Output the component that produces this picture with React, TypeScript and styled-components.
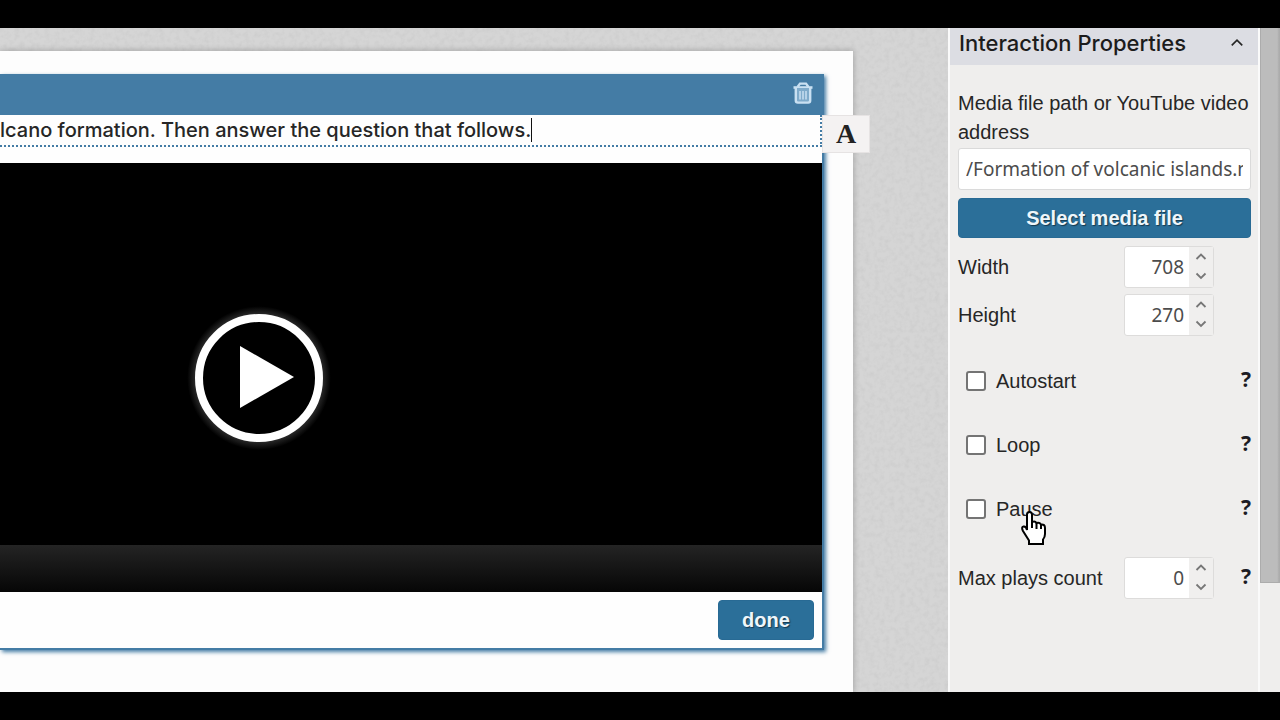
import React, { useState } from "react";
import styled, { createGlobalStyle } from "styled-components";

const sans = `"Liberation Sans", Arial, sans-serif`;
const humanist = `"Noto Sans", "Open Sans", sans-serif`;

const Global = createGlobalStyle`
  *, *::before, *::after { box-sizing: border-box; }
  body { margin: 0; background: #000; color: #262626; font: 20px/28px ${sans}; }
  button, input { font: inherit; color: inherit; margin: 0; }
  button { cursor: pointer; }
`;

const Screen = styled.div`
  min-height: 100vh;
  padding: 28px 0;
  display: flex;
  background: #000;
`;

const Workspace = styled.main`
  flex: 1;
  min-width: 0;
  display: flex;
  background: #efeeed;
  position: relative;
  overflow: hidden;
`;

const Canvas = styled.section`
  flex: 1;
  min-width: 0;
  display: flex;
  position: relative;
  overflow: hidden;
  padding: 23px 95px 0 0;
  background: #d5d5d5;
`;

const Texture = styled.svg`
  position: absolute;
  inset: 0;
  width: 100%;
  height: 100%;
`;

const Paper = styled.div`
  flex: 1;
  min-width: 0;
  position: relative;
  padding: 23px 29px 42px 0;
  background: #fdfdfd;
  box-shadow: 0 0 6px 1px rgba(0, 0, 0, 0.2);
`;

const Card = styled.article`
  position: relative;
  background: #fefefe;
  border: solid #447ca5;
  border-width: 0 2px 2px 0;
  box-shadow: 2px 2px 4px #447ca5;
`;

const CardHeader = styled.header`
  display: flex;
  justify-content: flex-end;
  align-items: center;
  height: 41px;
  padding: 0 8px 4px;
  background: #447ca5;
`;

const IconButton = styled.button`
  display: flex;
  padding: 0;
  border: 0;
  background: none;
`;

const Prompt = styled.div`
  display: flex;
  align-items: center;
  height: 32px;
  margin-bottom: 16px;
  border: dotted #447ca5;
  border-width: 0 2px 2px 0;
`;

const PromptInput = styled.input`
  field-sizing: content;
  padding: 0;
  border: 0;
  outline: 0;
  background: none;
  font: 500 20px/28px Inter, sans-serif;
`;

const Caret = styled.span`
  width: 1px;
  height: 24px;
  background: #111;
`;

const FontButton = styled.button`
  position: absolute;
  top: 41px;
  left: 100%;
  width: 48px;
  height: 38px;
  padding: 0;
  border: 1px solid #e6e3e3;
  background: #f4f2f2;
  color: #222;
  font: bold 28px/34px "Liberation Serif", serif;
`;

const Video = styled.div`
  background: #000;
`;

const Stage = styled.div`
  display: flex;
  align-items: center;
  height: 382px;
  padding: 48px 0 0 180px;
`;

const Controls = styled.div`
  height: 47px;
  background: linear-gradient(#242424, #060606);
`;

const CardFooter = styled.footer`
  display: flex;
  justify-content: flex-end;
  padding: 8px;
`;

const PrimaryButton = styled.button<{ $wide?: boolean }>`
  width: ${(p) => (p.$wide ? "100%" : "96px")};
  height: 40px;
  padding: 0;
  border: 1px solid #286a94;
  border-radius: 4px;
  background: #2b6f99;
  color: #eef6fb;
  font-weight: bold;
  line-height: 38px;
  text-shadow: 1px 1px 1px rgba(0, 0, 0, 0.5);
`;

const Sidebar = styled.aside`
  width: 312px;
  border: solid #fafafa;
  border-width: 0 2px;
  background: #efeeed;
`;

const PanelHeader = styled.header`
  display: flex;
  justify-content: space-between;
  align-items: center;
  height: 37px;
  padding: 0 14px 8px 9px;
  background: #dcdde3;
`;

const PanelTitle = styled.h2`
  margin: 0;
  color: #1c1c1c;
  font: 500 22px/26px Inter, sans-serif;
`;

const Form = styled.form`
  display: flex;
  flex-direction: column;
  padding: 24px 7px 0 8px;
`;

const FieldLabel = styled.label`
  flex: 1;
  line-height: 29px;
`;

const PathInput = styled.input`
  width: 100%;
  height: 42px;
  margin: 1px 0 8px;
  padding: 0 7px;
  border: 1px solid #dadada;
  border-radius: 3px;
  background: #fff;
  color: #4c4c4c;
  font-family: ${humanist};
  font-size: 19px;
`;

const NumberRow = styled.div`
  display: flex;
  align-items: center;
  height: 42px;
  margin-top: 6px;
`;

const NumberRows = styled.div`
  display: flex;
  flex-direction: column;
  padding: 2px 0 13px;
`;

const Spinner = styled.div`
  display: flex;
  width: 90px;
  height: 42px;
  border: 1px solid #dddcdb;
  border-radius: 3px;
  background: #fff;
`;

const NumberInput = styled.input`
  width: 64px;
  padding: 0 5px 0 0;
  border: 0;
  background: none;
  color: #4c4c4c;
  text-align: right;
  font-family: ${humanist};
  font-size: 19px;
`;

const Steps = styled.div`
  flex: 1;
  display: flex;
  flex-direction: column;
  padding-bottom: 1px;
  background: #f0efee;
`;

const Step = styled.button`
  flex: 1;
  display: grid;
  place-items: center;
  padding: 0;
  border: 0;
  background: none;
  color: #777;
`;

const HelpCell = styled.div`
  width: 37px;
  display: flex;
  justify-content: flex-end;
`;

const Help = styled.button`
  padding: 0 0 4px;
  border: 0;
  background: none;
  color: #1c1c24;
  font: bold 21px/28px "Noto Sans", sans-serif;
`;

const Checks = styled.div`
  display: flex;
  flex-direction: column;
  padding-bottom: 8px;
`;

const CheckRow = styled.div`
  display: flex;
  align-items: center;
  gap: 10px;
  height: 64px;
  padding-left: 8px;
`;

const Checkbox = styled.input`
  appearance: none;
  width: 20px;
  height: 20px;
  border: 2px solid #747474;
  border-radius: 3px;
  background: #fff;
  &:checked { background: #2b6f99; }
`;

const ScrollTrack = styled.div`
  width: 20px;
  background: #efeeed;
`;

const ScrollThumb = styled.div`
  height: 555px;
  border: solid #acacac;
  border-width: 0 0 1px 1px;
  background: linear-gradient(90deg, #bcbcbc 85%, #acacac 95%);
`;

const Pointer = styled.svg`
  position: absolute;
  top: 482px;
  right: 233px;
  pointer-events: none;
`;

function Chevron({ down, size = 12, weight = 1.8 }: { down?: boolean; size?: number; weight?: number }) {
  return (
    <svg width={size} height={size} viewBox="0 0 12 12" fill="none" stroke="currentColor" strokeWidth={weight}>
      <path d={down ? "M1.5 3.5 6 8l4.5-4.5" : "M1.5 8 6 3.5l4.5 4.5"} />
    </svg>
  );
}

function NumberField({ id, label, initial, help }: { id: string; label: string; initial: number; help?: boolean }) {
  const [value, setValue] = useState(initial);
  return (
    <NumberRow>
      <FieldLabel htmlFor={id}>{label}</FieldLabel>
      <Spinner>
        <NumberInput id={id} inputMode="numeric" value={value} onChange={(e) => setValue(Number(e.target.value) || 0)} />
        <Steps>
          <Step type="button" aria-label={`Increase ${label}`} onClick={() => setValue(value + 1)}><Chevron /></Step>
          <Step type="button" aria-label={`Decrease ${label}`} onClick={() => setValue(Math.max(0, value - 1))}><Chevron down /></Step>
        </Steps>
      </Spinner>
      <HelpCell>{help && <Help type="button">?</Help>}</HelpCell>
    </NumberRow>
  );
}

function CheckField({ id, label }: { id: string; label: string }) {
  return (
    <CheckRow>
      <Checkbox id={id} type="checkbox" />
      <FieldLabel htmlFor={id}>{label}</FieldLabel>
      <Help type="button">?</Help>
    </CheckRow>
  );
}

export default function App() {
  const [prompt, setPrompt] = useState("lcano formation. Then answer the question that follows.");
  const [path, setPath] = useState("/Formation of volcanic islands.mp4");
  return (
    <>
      <Global />
      <Screen>
        <Workspace>
          <Canvas>
            <Texture aria-hidden="true">
              <filter id="grain">
                <feTurbulence type="fractalNoise" baseFrequency="0.2" numOctaves="3" seed="4" />
                <feColorMatrix values="0 0 0 0 0.5  0 0 0 0 0.5  0 0 0 0 0.5  0.6 0 0 0 -0.24" />
              </filter>
              <rect width="100%" height="100%" filter="url(#grain)" />
            </Texture>
            <Paper>
              <Card>
                <CardHeader>
                  <IconButton type="button" aria-label="Delete">
                    <svg width="22" height="24" viewBox="0 0 22 24" fill="none" stroke="#c9e0f2" strokeWidth="2">
                      <path d="M1.500 6.500h19" strokeWidth="2.6" />
                      <path d="M5.500 6 8 2.600h6L16.500 6" strokeWidth="2.4" />
                      <path d="M3.800 7v12.600q0 2 2 2h10.400q2 0 2-2V7" fill="#7fabcb" strokeWidth="2.4" />
                      <path d="M8 10v8.500M11 10v8.500M14 10v8.500" strokeWidth="1.5" />
                    </svg>
                  </IconButton>
                </CardHeader>
                <Prompt>
                  <PromptInput aria-label="Prompt" size={50} value={prompt} onChange={(e) => setPrompt(e.target.value)} />
                  <Caret />
                </Prompt>
                <Video>
                  <Stage>
                    <IconButton type="button" aria-label="Play video">
                      <svg width="158" height="158" viewBox="0 0 158 158">
                        <defs>
                          <radialGradient id="glow">
                            <stop offset="0.8" stopColor="#303030" />
                            <stop offset="0.92" stopColor="#000" />
                          </radialGradient>
                        </defs>
                        <circle cx="79" cy="79" r="78" fill="url(#glow)" />
                        <circle cx="79" cy="79" r="60" fill="#000" stroke="#fff" strokeWidth="8" />
                        <path d="M60 47 114 78 60 109Z" fill="#fff" />
                      </svg>
                    </IconButton>
                  </Stage>
                  <Controls />
                </Video>
                <CardFooter><PrimaryButton type="button">done</PrimaryButton></CardFooter>
                <FontButton type="button">A</FontButton>
              </Card>
            </Paper>
          </Canvas>
          <Sidebar>
            <PanelHeader>
              <PanelTitle>Interaction Properties</PanelTitle>
              <IconButton type="button" aria-label="Collapse"><Chevron size={14} weight={1.4} /></IconButton>
            </PanelHeader>
            <Form onSubmit={(e) => e.preventDefault()}>
              <FieldLabel htmlFor="path">Media file path or YouTube video address</FieldLabel>
              <PathInput id="path" value={path} onChange={(e) => setPath(e.target.value)} />
              <PrimaryButton type="button" $wide>Select media file</PrimaryButton>
              <NumberRows>
                <NumberField id="width" label="Width" initial={708} />
                <NumberField id="height" label="Height" initial={270} />
              </NumberRows>
              <Checks>
                <CheckField id="autostart" label="Autostart" />
                <CheckField id="loop" label="Loop" />
                <CheckField id="pause" label="Pause" />
              </Checks>
              <NumberRows>
                <NumberField id="plays" label="Max plays count" initial={0} help />
              </NumberRows>
            </Form>
          </Sidebar>
          <ScrollTrack><ScrollThumb /></ScrollTrack>
          <Pointer width="28" height="36" viewBox="0 0 28 36" aria-hidden="true">
            <path d="M8 20V4.500q0-2.500 2.500-2.500T13 4.500V12q3-1.500 4.500 1 3-1 4.500 1.500 4-.5 4 3.500v6q0 3-2 5.500V34H10v-3.500L4 21q-2-4 .5-4.500T8 20Z" fill="#fff" stroke="#000" strokeWidth="2" />
            <path d="M13 11v7M17.500 13v6M22 14v5" stroke="#000" strokeWidth="2" />
          </Pointer>
        </Workspace>
      </Screen>
    </>
  );
}
